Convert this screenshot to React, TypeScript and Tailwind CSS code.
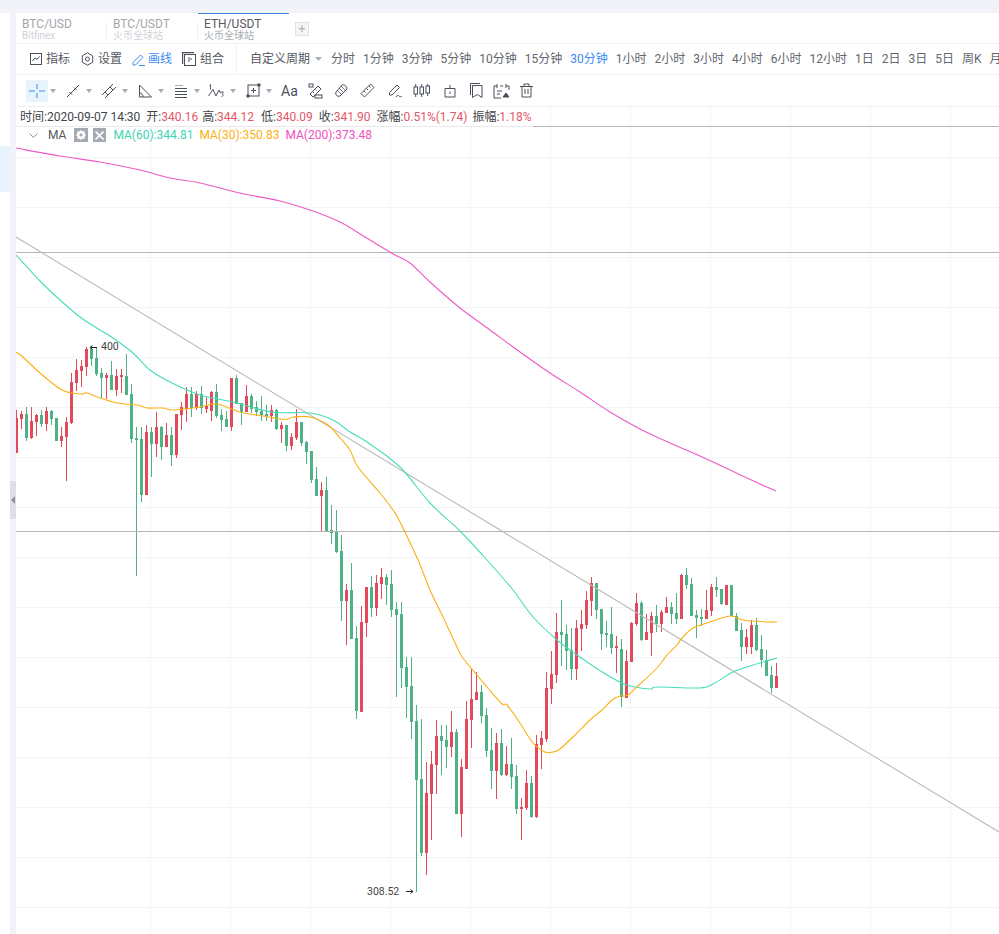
import React from "react";

type C = [string, number, number, number, number];
const z4: C[] = [
["r",240,265,368,368],["r",243,252,267,297],["g",232,252,324,332],["r",230,273,324,327],["r",252,255,276,318],["g",240,255,282,290],["r",230,243,282,303],["g",240,243,267,285],["g",264,264,332,332],["r",292,318,332,352],
["r",260,276,320,453],["r",130,156,279,281],["r",86,120,158,183],["r",90,108,122,171],["r",51,57,111,138],["g",47,57,87,108],["g",50,84,132,138],["g",115,129,144,204],["r",129,135,144,207],["g",93,135,180,180],
["r",118,138,180,197],["r",117,135,141,190],["g",72,138,195,195],["g",162,192,327,339],["g",291,324,330,739],["g",291,327,495,516],["r",285,306,495,495],["g",291,306,342,441],["r",246,291,342,380],["g",288,291,351,390],
["r",279,315,351,351],["g",292,315,375,408],["r",252,252,375,384],["r",216,231,255,299],["r",171,192,237,276],["g",171,192,234,260],["r",183,192,234,240],
];
const z5: C[] = [
["g",78,102,144,162],["r",110,138,147,160],["r",93,96,153,183],["g",72,96,168,174],["g",147,165,180,213],["g",152,177,201,201],["r",54,54,201,213],["g",45,54,132,132],["g",130,130,156,194],["r",75,108,156,156],
["g",102,108,147,160],["g",123,141,156,168],["g",108,153,165,183],["g",135,162,168,182],["r",135,150,168,186],["g",147,150,207,210],["r",186,195,207,249],["g",195,195,258,272],["r",219,231,258,270],["r",147,186,234,240],
["g",186,186,249,258],["g",243,246,276,312],["g",273,273,360,369],["g",321,357,408,408],["r",366,390,408,513],["g",351,390,513,513],["g",435,510,519,552],["g",450,516,576,580],["g",525,573,722,783],
];
const z6: C[] = [
["r",72,90,122,255],["g",10,90,237,237],["g",198,234,453,477],["r",138,186,456,456],["r",80,81,189,230],["g",48,81,144,171],["r",45,69,144,168],["r",25,51,72,117],["g",42,51,75,135],["g",30,72,150,171],
["g",126,147,165,410],["g",126,162,324,384],["g",290,321,381,474],["g",291,378,486,537],["g",435,483,660,995],["g",478,657,879,888],["r",606,699,879,945],["r",574,612,702,840],["r",480,528,615,702],["g",495,528,543,645],
["g",495,540,561,624],["r",453,516,561,590],["g",507,516,762,762],["r",597,621,762,831],["r",423,477,627,627],["r",327,417,480,564],["r",337,396,420,421],["g",375,396,468,489],["g",444,465,573,590],["g",504,570,633,687],
["r",519,549,633,718],["g",507,549,645,648],["r",558,612,645,648],["g",533,612,651,687],["g",615,648,747,762],["r",714,741,747,840],["r",630,669,744,750],["g",648,669,771,774],["r",525,552,771,774],["r",513,534,555,627],
["r",336,384,537,546],["r",273,342,387,432],["r",160,216,345,370],
];
const z7: C[] = [
["g",120,216,225,318],["g",195,222,273,330],["g",205,270,327,360],["r",180,204,327,360],["r",150,192,207,273],["r",93,120,195,207],["r",50,69,123,168],["g",69,69,150,177],["g",147,147,222,270],["g",183,219,225,261],
["g",141,222,264,282],["r",228,258,264,339],["g",238,267,411,440],["r",270,303,414,414],["r",186,189,306,306],["r",100,129,192,198],["g",123,129,240,243],["r",162,216,240,240],["r",155,168,219,288],["g",135,168,192,216],
["r",150,156,192,216],["r",111,141,159,159],["g",126,141,162,192],["g",99,159,177,192],["r",42,45,177,177],["g",24,45,75,87],["g",54,72,168,168],["g",150,165,174,234],["g",147,171,177,198],["r",90,150,177,177],
["r",72,81,153,168],["g",51,81,90,110],["g",87,87,132,135],["r",75,75,135,135],["g",75,75,168,168],["g",159,168,213,213],["g",189,210,261,303],["r",207,231,261,282],["r",180,195,261,282],["g",174,195,270,273],
["g",225,267,300,321],["g",270,300,348,348],["g",318,345,384,400],["r",309,348,384,384],
];
const conv = (a: C[], y0: number) => a.map(([c, h, t, b, l]) => ({ c, h: y0 + h / 3, t: y0 + t / 3, b: y0 + b / 3, l: y0 + l / 3 }));
const candles = [...conv(z4, 330), ...conv(z5, 360), ...conv(z6, 560), ...conv(z7, 560)];

const ma200 = "16,148 60,156 100,162 140,170 170,178 200,183 240,193 280,201 310,210 340,222 370,240 395,255 410,263 430,282 460,308 490,330 520,352 550,373 580,392 610,412 640,429 670,443 700,456 730,470 760,484 776,491";
const ma60 = "16,255 40,281 60,300 80,317 100,330 113,338 133,353 150,370 170,382 200,395 233,402 272,412 310,413 333,420 350,432 367,442 400,467 430,503 460,531 487,560 513,590 533,617 557,640 577,655 607,675 627,685 650,689 657,687 700,688 713,684 733,672 753,665 777,658";
const ma30 = "16,352 23,357 40,373 62,390 80,394 87,393 100,398 117,403 137,405 147,408 163,408 173,410 200,407 217,404 240,412 263,416 280,419 288,419 293,417 310,417 328,425 340,438 350,450 358,467 380,493 393,510 400,522 418,560 430,590 443,617 457,647 463,658 487,687 502,704 507,705 520,723 533,743 545,752 553,752 560,749 575,735 590,720 602,710 612,700 620,696 628,695 640,684 657,668 667,655 677,645 682,638 693,628 707,623 730,616 743,620 767,622 777,622";

function smooth(s: string) {
  const p = s.split(" ").map((q) => q.split(",").map(Number));
  let d = `M${p[0][0]} ${p[0][1]}`;
  for (let i = 0; i < p.length - 1; i++) {
    const a = p[Math.max(i - 1, 0)], b = p[i], c = p[i + 1], e = p[Math.min(i + 2, p.length - 1)];
    const c1x = b[0] + (c[0] - a[0]) / 6, c1y = b[1] + (c[1] - a[1]) / 6;
    const c2x = c[0] - (e[0] - b[0]) / 6, c2y = c[1] - (e[1] - b[1]) / 6;
    d += `C${c1x} ${c1y} ${c2x} ${c2y} ${c[0]} ${c[1]}`;
  }
  return d;
}

function Chart() {
  const vs = [150, 230, 310, 390, 470, 550, 630, 710, 790, 870, 950];
  const hs = [157, 207, 257, 307, 357, 407, 457, 507, 557, 607, 657, 707, 757, 807, 857, 907];
  return (
    <svg width="983" height="827" viewBox="16 107 983 827" className="block">
      <g stroke="#f4f5f8" strokeWidth="1" shapeRendering="crispEdges">
        {vs.map((x) => <line key={x} x1={x + 0.5} x2={x + 0.5} y1={107} y2={934} />)}
        {hs.map((y) => <line key={y} y1={y + 0.5} y2={y + 0.5} x1={16} x2={999} />)}
      </g>
      <g shapeRendering="crispEdges">
        {candles.map((d, i) => {
          const col = d.c === "r" ? "#e24a5c" : "#4fb286";
          return (
            <g key={i} fill={col}>
              <rect x={16 + 5 * i} y={d.h} width={1} height={Math.max(d.l - d.h, 1)} />
              <rect x={15 + 5 * i} y={d.t} width={3} height={Math.max(d.b - d.t, 1.5)} />
            </g>
          );
        })}
      </g>
      <g stroke="#b5b5b5" strokeWidth="1" shapeRendering="crispEdges">
        <line x1={16} x2={999} y1={126.5} y2={126.5} />
        <line x1={16} x2={999} y1={252.5} y2={252.5} />
        <line x1={16} x2={999} y1={531.5} y2={531.5} />
      </g>
      <line x1={16} y1={237} x2={999} y2={832} stroke="#bbbbbb" strokeWidth="1.1" />
      <path d={smooth(ma200)} fill="none" stroke="#ee5ac3" strokeWidth="1.1" />
      <path d={smooth(ma60)} fill="none" stroke="#48dcba" strokeWidth="1.1" />
      <path d={smooth(ma30)} fill="none" stroke="#fbb014" strokeWidth="1.1" />
      <path d="M90 347.5h7M90 347.5l2.5-2M90 347.5l2.5 2" stroke="#222" fill="none" />
      <text x={101} y={350} fontSize="10.5" fill="#444" fontFamily="Roboto, sans-serif">400</text>
      <text x={367} y={895} fontSize="10.5" fill="#444" fontFamily="Roboto, sans-serif">308.52</text>
      <path d="M406 891.5h7M413 891.5l-2.5-2M413 891.5l-2.5 2" stroke="#222" fill="none" />
    </svg>
  );
}

const S = "#4a4f5c";
const Svg = ({ children, w = 16, h = 16, cls = "" }: { children: React.ReactNode; w?: number; h?: number; cls?: string }) => (
  <svg width={w} height={h} viewBox={`0 0 ${w} ${h}`} fill="none" stroke={S} strokeWidth="1" className={"block shrink-0 " + cls}>{children}</svg>
);
const Caret = ({ cls = "", w = 6 }: { cls?: string; w?: number }) => (
  <svg width={w} height="4" viewBox={`0 0 ${w} 4`} className={"block shrink-0 " + cls}><path d={`M0 0h${w}L${w / 2} 4z`} fill="#a6abb5" /></svg>
);

function Tab({ a, b, active, divider }: { a: string; b: string; active?: boolean; divider?: boolean }) {
  return (
    <div className={"relative w-[91px] h-[30px] pl-[6px] pt-[3px] border-t " + (active ? "border-[#3f80d8]" : "border-transparent")}>
      {divider && <div className="absolute left-[-1px] top-[8px] h-[16px] w-px bg-[#eceef1]" />}
      <div className={"text-[12px] leading-[14px] " + (active ? "text-[#55595f]" : "text-[#a2a6ac]")}>{a}</div>
      <div className={"text-[10px] leading-[10px] " + (active ? "text-[#a6aab0]" : "text-[#cfd2d6]")}>{b}</div>
    </div>
  );
}

const periods = ["分时","1分钟","3分钟","5分钟","10分钟","15分钟","30分钟","1小时","2小时","3小时","4小时","6小时","12小时","1日","2日","3日","5日","周K","月K"];

export default function App() {
  return (
    <div className="h-[934px] w-[999px] overflow-hidden bg-white flex flex-col font-[Roboto,'Noto_Sans_CJK_SC',sans-serif]">
      <div className="h-[13px] bg-[#f1f3f8] shrink-0" />
      <div className="flex flex-1 min-h-0">
        <div className="w-[10px] shrink-0 bg-white pt-[133px]">
          <div className="h-[46px] bg-[#e8f4fd]" />
        </div>
        <div className="relative w-[6px] shrink-0 bg-[#f1f3f8]">
          <div className="absolute top-[468px] left-0 w-[6px] h-[38px] bg-[#dcdfe4] flex items-center justify-center">
            <div className="w-0 h-0 border-y-[4px] border-y-transparent border-r-[4px] border-r-[#8c919b]" />
          </div>
        </div>
        <div className="flex-1 min-w-0 flex flex-col">
          {/* tabs */}
          <div className="h-[31px] shrink-0 flex border-b border-[#f0f1f4]">
            <Tab a="BTC/USD" b="Bitfinex" />
            <Tab a="BTC/USDT" b="火币全球站" divider />
            <Tab a="ETH/USDT" b="火币全球站" active divider />
            <div className="ml-[6px] mt-[9px] w-[14px] h-[14px] bg-[#f5f5f6] border border-[#e2e3e6] flex items-center justify-center text-[12px] leading-none text-[#b0b3b9]">+</div>
          </div>
          {/* toolbar 1 */}
          <div className="h-[31px] shrink-0 flex items-center overflow-hidden border-b border-[#f0f1f4] text-[12px] text-[#55595f] whitespace-nowrap">
            <div className="w-[221px] shrink-0 h-full flex items-center pl-[14px] border-r border-[#f0f1f4]">
              <Svg w={12} h={12}><rect x=".5" y=".5" width="11" height="11" /><path d="M2.500 8l2.500-3 2 1.500 2.500-3" /></Svg>
              <span className="ml-[4px]">指标</span>
              <Svg w={13} h={14} cls="ml-[11px]"><path d="M6.500 .8l5.200 3v6.400l-5.200 3-5.200-3V3.800z" /><circle cx="6.500" cy="7" r="2" /></Svg>
              <span className="ml-[4px]">设置</span>
              <svg width="13" height="13" viewBox="0 0 13 13" fill="none" stroke="#3a8bf0" className="block shrink-0 ml-[10px]"><path d="M1 9.500L8.500 2l2.500 2.500L3.500 12H1zM7 12.500h6" /></svg>
              <span className="ml-[3px] text-[#3a8bf0]">画线</span>
              <Svg w={14} h={14} cls="ml-[10px]"><path d="M.5 12V.5H12" strokeWidth="1.400" /><rect x="2.500" y="2.500" width="11" height="11" /><path d="M7 5v5M9 6v2" /></Svg>
              <span className="ml-[4px]">组合</span>
            </div>
            <span className="ml-[13px] shrink-0">自定义周期</span>
            <Caret cls="ml-[5px]" w={7} />
            <div className="ml-[9px] flex items-center gap-[8px] shrink-0 text-[#62666d]">
              {periods.map((p) => (
                <span key={p} className={"shrink-0 " + (p === "30分钟" ? "text-[#3a8bf0]" : "")}>{p}</span>
              ))}
            </div>
          </div>
          {/* toolbar 2 */}
          <div className="h-[32px] shrink-0 flex items-center border-b border-[#f0f1f4] pl-[10px]">
            <div className="w-[22px] h-[22px] bg-[#e8f4fd] flex items-center justify-center">
              <svg width="16" height="16" viewBox="0 0 16 16" stroke="#3a8bf0" fill="none"><path d="M0 8h6M10 8h6M8 1v5M8 10v5" /></svg>
            </div>
            <Caret cls="ml-[2px]" />
            <Svg w={14} h={14} cls="ml-[10px]"><path d="M1 13L13 1M3.500 8l2.500 2.500M8 3.500l2.500 2.500" /></Svg>
            <Caret cls="ml-[6px]" />
            <Svg w={14} h={14} cls="ml-[10px]"><path d="M0 11L11 0M3 14L14 3M3 8l3 3M8 3l3 3" /></Svg>
            <Caret cls="ml-[6px]" />
            <Svg w={14} h={14} cls="ml-[10px]"><path d="M1.500 1v12h12zM1.500 9c2 0 3.500 1.500 3.500 4" /></Svg>
            <Caret cls="ml-[6px]" />
            <Svg w={14} h={14} cls="ml-[10px]"><path d="M1 1.500h8" stroke="#a6abb5" /><path d="M1 4.500h12M1 7.500h12M1 10.500h12M1 13.500h12" /></Svg>
            <Caret cls="ml-[6px]" />
            <Svg w={16} h={14} cls="ml-[8px]"><path d="M0.500 12L5 5.500l3 6.500 3-6 1.500 3" /><path d="M1.500 1.500l1-1v5" strokeWidth=".9" /><path d="M12.500 8h3l-1.500 1.800c1.500 0 1.500 2.700-.5 2.700" strokeWidth=".9" /></Svg>
            <Caret cls="ml-[6px]" />
            <Svg w={15} h={15} cls="ml-[10px]"><rect x="2" y="2" width="11" height="11" /><path d="M7.500 5v5M5 7.500h5" /><rect x="12" y="1" width="2" height="2" fill={S} /><rect x="1" y="12" width="2" height="2" fill={S} /></Svg>
            <Caret cls="ml-[5px]" />
            <span className="ml-[9px] w-[16px] shrink-0 text-[14px] leading-none text-[#4a4f5c]">Aa</span>
            <Svg w={15} h={16} cls="ml-[11px]"><rect x="1" y="1" width="4" height="3" /><rect x="7" y="12" width="7" height="3" /><path d="M2 11l8-8 3 3-8 8zM5 9l1 1M7.500 6.500l1 1" /></Svg>
            <Svg w={15} h={15} cls="ml-[11px]"><path d="M2 9l6-7c2-1 5 1 5 4l-7 7c-3 1-5-1-4-4z" /><path d="M5 5l5 5M3 7l5 5M7 3l5 5" strokeWidth=".8" /></Svg>
            <Svg w={15} h={15} cls="ml-[11px]"><path d="M1 10.500L10.500 1 14 4.500 4.500 14zM4 8l1.500 1.500M6.500 5.500L8 7M9 3l1.500 1.500" /></Svg>
            <Svg w={15} h={15} cls="ml-[13px]"><path d="M1.500 9.500L9 2l2.500 2.500L4 12H1.500zM8 14c1-2 2-2 3-1s2 1 3 0" /></Svg>
            <Svg w={18} h={16} cls="ml-[10px]"><rect x="1" y="4" width="3.500" height="7" /><rect x="7" y="4" width="3.500" height="7" /><rect x="13" y="3" width="3.500" height="7" /><path d="M2.700 1v3M2.700 11v3M8.700 1v3M8.700 11v3M14.700 1v2M14.700 10v3" /></Svg>
            <Svg w={12} h={15} cls="ml-[13px]"><path d="M1 5.500h10v8.500H1zM6 2v3.500M6 8.500v2.500" /></Svg>
            <Svg w={13} h={16} cls="ml-[14px]"><path d="M.5 12V.5H10M2.500 2.500h9.500v12l-4.700-3-4.800 3z" /></Svg>
            <Svg w={17} h={16} cls="ml-[10px]"><path d="M1 3h3M7 3h3M13 3h3v4M1 3v12h7M4 1v4M13 1v4M4 8h5M4 11h3" /><path d="M10 14l3-4 3 4z" fill={S} /></Svg>
            <Svg w={13} h={15} cls="ml-[10px]"><path d="M0 3.500h13M4 3.500V1h5v2.500M2 3.500V14h9V3.500M5 6v5M8 6v5" /></Svg>
          </div>
          {/* chart */}
          <div className="relative flex-1 min-h-0">
            <Chart />
            <div className="absolute left-0 top-0 h-[20px] pl-[4px] pr-[1px] pb-[1px] flex items-center bg-white/70 text-[12px] whitespace-nowrap text-[#3f434a]">
              <span>时间:2020-09-07 14:30</span>
              <span className="ml-[6px]">开:<span className="text-[#e55765]">340.16</span></span>
              <span className="ml-[4px]">高:<span className="text-[#e55765]">344.12</span></span>
              <span className="ml-[7px]">低:<span className="text-[#e55765]">340.09</span></span>
              <span className="ml-[6px]">收:<span className="text-[#e55765]">341.90</span></span>
              <span className="ml-[6px]">涨幅:<span className="text-[#e55765]">0.51%(1.74)</span></span>
              <span className="ml-[5px]">振幅:<span className="text-[#e55765]">1.18%</span></span>
            </div>
            <div className="absolute left-[13px] top-[20px] h-[16px] flex items-center text-[12px] whitespace-nowrap">
              <svg width="9" height="5" viewBox="0 0 9 5" fill="none" stroke="#8c919b" className="block"><path d="M.5 .5l4 4 4-4" /></svg>
              <span className="ml-[10px] text-[#55595f]">MA</span>
              <div className="ml-[8px] w-[14px] h-[14px] bg-[#a4a9b4] flex items-center justify-center">
                <svg width="10" height="10" viewBox="0 0 10 10"><circle cx="5" cy="5" r="3.200" fill="none" stroke="#fff" strokeWidth="1.800" /><path d="M5 0v10M0 5h10M1.500 1.500l7 7M8.500 1.500l-7 7" stroke="#fff" strokeWidth="1.100" /><circle cx="5" cy="5" r="1.400" fill="#a4a9b4" /></svg>
              </div>
              <div className="ml-[5px] w-[13px] h-[14px] bg-[#a4a9b4] flex items-center justify-center">
                <svg width="9" height="9" viewBox="0 0 9 9" stroke="#fff" strokeWidth="1.600"><path d="M.5 .5l8 8M8.500 .5l-8 8" /></svg>
              </div>
              <span className="ml-[7px] text-[#3ed4b0]">MA(60):344.81</span>
              <span className="ml-[6px] text-[#fbb014]">MA(30):350.83</span>
              <span className="ml-[6px] text-[#f04fc0]">MA(200):373.48</span>
            </div>
          </div>
        </div>
      </div>
    </div>
  );
}
